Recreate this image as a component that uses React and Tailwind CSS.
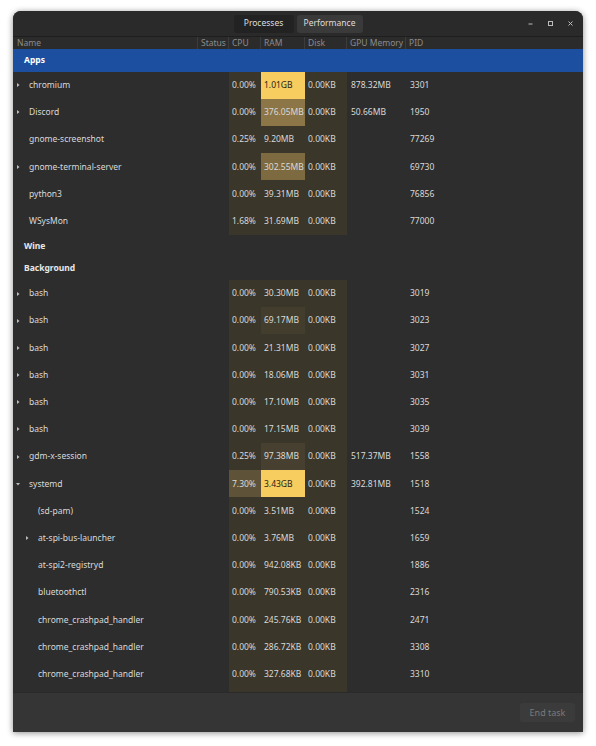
import React from "react";

const ROW_H = "h-[27.2px]";

const apps = [
  { name: "chromium", exp: "r", cpu: "0.00%", ram: "1.01GB", disk: "0.00KB", gpu: "878.32MB", pid: "3301", ramBg: "bg-[#f6cd5e]", ramDark: true },
  { name: "Discord", exp: "r", cpu: "0.00%", ram: "376.05MB", disk: "0.00KB", gpu: "50.66MB", pid: "1950", ramBg: "bg-[#8c7547]" },
  { name: "gnome-screenshot", cpu: "0.25%", ram: "9.20MB", disk: "0.00KB", gpu: "", pid: "77269" },
  { name: "gnome-terminal-server", exp: "r", cpu: "0.00%", ram: "302.55MB", disk: "0.00KB", gpu: "", pid: "69730", ramBg: "bg-[#7d6a40]" },
  { name: "python3", cpu: "0.00%", ram: "39.31MB", disk: "0.00KB", gpu: "", pid: "76856" },
  { name: "WSysMon", cpu: "1.68%", ram: "31.69MB", disk: "0.00KB", gpu: "", pid: "77000" },
];

const bg = [
  { name: "bash", exp: "r", cpu: "0.00%", ram: "30.30MB", disk: "0.00KB", gpu: "", pid: "3019" },
  { name: "bash", exp: "r", cpu: "0.00%", ram: "69.17MB", disk: "0.00KB", gpu: "", pid: "3023", ramBg: "bg-[#433d2d]" },
  { name: "bash", exp: "r", cpu: "0.00%", ram: "21.31MB", disk: "0.00KB", gpu: "", pid: "3027" },
  { name: "bash", exp: "r", cpu: "0.00%", ram: "18.06MB", disk: "0.00KB", gpu: "", pid: "3031" },
  { name: "bash", exp: "r", cpu: "0.00%", ram: "17.10MB", disk: "0.00KB", gpu: "", pid: "3035" },
  { name: "bash", exp: "r", cpu: "0.00%", ram: "17.15MB", disk: "0.00KB", gpu: "", pid: "3039" },
  { name: "gdm-x-session", exp: "r", cpu: "0.25%", ram: "97.38MB", disk: "0.00KB", gpu: "517.37MB", pid: "1558", ramBg: "bg-[#474030]" },
  { name: "systemd", exp: "d", cpu: "7.30%", ram: "3.43GB", disk: "0.00KB", gpu: "392.81MB", pid: "1518", ramBg: "bg-[#f6cd5e]", ramDark: true, cpuBg: "bg-[#5e5339]" },
  { name: "(sd-pam)", child: true, cpu: "0.00%", ram: "3.51MB", disk: "0.00KB", gpu: "", pid: "1524" },
  { name: "at-spi-bus-launcher", child: true, exp: "r", cpu: "0.00%", ram: "3.76MB", disk: "0.00KB", gpu: "", pid: "1659" },
  { name: "at-spi2-registryd", child: true, cpu: "0.00%", ram: "942.08KB", disk: "0.00KB", gpu: "", pid: "1886" },
  { name: "bluetoothctl", child: true, cpu: "0.00%", ram: "790.53KB", disk: "0.00KB", gpu: "", pid: "2316" },
  { name: "chrome_crashpad_handler", child: true, cpu: "0.00%", ram: "245.76KB", disk: "0.00KB", gpu: "", pid: "2471" },
  { name: "chrome_crashpad_handler", child: true, cpu: "0.00%", ram: "286.72KB", disk: "0.00KB", gpu: "", pid: "3308" },
  { name: "chrome_crashpad_handler", child: true, cpu: "0.00%", ram: "327.68KB", disk: "0.00KB", gpu: "", pid: "3310" },
];

function Tri({ dir }) {
  if (dir === "d") {
    return (
      <svg width="6" height="6" viewBox="0 0 6 6" className="shrink-0">
        <path d="M1 2 L5 2 L3 4.5 Z" fill="#bdbdbd" />
      </svg>
    );
  }
  return (
    <svg width="6" height="6" viewBox="0 0 6 6" className="shrink-0">
      <path d="M2 1 L4.5 3 L2 5 Z" fill="#bdbdbd" />
    </svg>
  );
}

function Row({ r }) {
  return (
    <div className={`flex ${ROW_H} items-stretch shrink-0`}>
      <div className={`w-[185px] flex items-center ${r.child ? "pl-[11px]" : "pl-[2px]"}`}>
        <div className="w-[14px] flex items-center justify-start">{r.exp ? <Tri dir={r.exp} /> : null}</div>
        <span>{r.name}</span>
      </div>
      <div className="w-[31px]" />
      <div className={`w-[32px] flex items-center pl-[3px] ${r.cpuBg || "bg-[#3a3629]"}`}>{r.cpu}</div>
      <div className={`w-[44px] flex items-center pl-[3px] ${r.ramBg || "bg-[#3a3629]"} ${r.ramDark ? "text-[#2a2418]" : ""}`}>{r.ram}</div>
      <div className="w-[42px] flex items-center pl-[3px] bg-[#3a3629]">{r.disk}</div>
      <div className="w-[59px] flex items-center pl-[4px]">{r.gpu}</div>
      <div className="flex-1 flex items-center pl-[4px]">{r.pid}</div>
    </div>
  );
}

function Filler() {
  return (
    <div className="flex flex-1 items-stretch">
      <div className="w-[185px]" />
      <div className="w-[31px]" />
      <div className="w-[32px] bg-[#3a3629]" />
      <div className="w-[44px] bg-[#3a3629]" />
      <div className="w-[42px] bg-[#3a3629]" />
      <div className="flex-1" />
    </div>
  );
}

function Group({ label, selected }) {
  return (
    <div className={`flex h-[22.6px] items-center pl-[11px] font-bold shrink-0 ${selected ? "bg-[#1c4fa0] text-white" : "text-[#e8e8e8]"}`}>
      {label}
    </div>
  );
}

function Hd({ w, label, last }) {
  return (
    <div className={`${w} flex items-center pl-[3px] ${last ? "" : "border-r border-[#3c3c3c]"}`}>{label}</div>
  );
}

export default function App() {
  return (
    <div className="w-[596px] h-[746px] bg-white flex pt-[11px] pl-[13px]" style={{ fontFamily: '"Noto Sans", "Open Sans", sans-serif' }}>
      <div className="w-[570px] h-[721px] bg-[#2d2d2d] rounded-t-[8px] overflow-hidden flex flex-col shadow-[0_1px_6px_rgba(0,0,0,0.45)] text-[8.5px] text-[#d9d9d9] leading-none">
        {/* title bar */}
        <div className="h-[25px] bg-[#2a2a2a] flex items-center relative shrink-0">
          <div className="flex-1 flex justify-center items-center gap-[3px]">
            <div className="h-[18px] w-[60px] justify-center flex items-center bg-[#222222] rounded-[3px] text-[#dedede] text-[8.5px]">Processes</div>
            <div className="h-[18px] w-[66px] justify-center flex items-center bg-[#3a3a3a] rounded-[3px] text-[#dedede] text-[8.5px]">Performance</div>
          </div>
          <div className="absolute right-[9px] top-0 h-[25px] flex items-center gap-[13px] text-[#bbbbbb]">
            <svg width="7" height="7" viewBox="0 0 7 7"><path d="M1.5 4h4" stroke="#bbb" strokeWidth="1" /></svg>
            <svg width="7" height="7" viewBox="0 0 7 7"><rect x="1.5" y="1.5" width="4" height="4" fill="none" stroke="#bbb" strokeWidth="1" /></svg>
            <svg width="7" height="7" viewBox="0 0 7 7"><path d="M1.5 1.5l4 4M5.5 1.5l-4 4" stroke="#bbb" strokeWidth="1" /></svg>
          </div>
        </div>
        {/* header */}
        <div className="h-[13px] bg-[#2b2b2b] border-t border-[#1e1e1e] flex items-stretch text-[#8c8c8c] shrink-0">
          <Hd w="w-[185px]" label={<span className="pl-[1px]">Name</span>} />
          <Hd w="w-[31px]" label="Status" />
          <Hd w="w-[32px]" label="CPU" />
          <Hd w="w-[44px]" label="RAM" />
          <Hd w="w-[42px]" label="Disk" />
          <Hd w="w-[59px]" label="GPU Memory" />
          <Hd w="flex-1" label="PID" last />
        </div>
        {/* table */}
        <div className="flex-1 flex flex-col overflow-hidden">
          <Group label="Apps" selected />
          {apps.map((r, i) => <Row key={"a" + i} r={r} />)}
          <Group label="Wine" />
          <Group label="Background" />
          {bg.map((r, i) => <Row key={"b" + i} r={r} />)}
          <Filler />
        </div>
        {/* footer */}
        <div className="h-[40px] bg-[#353535] border-t border-[#2a2a2a] flex items-center justify-end pr-[8px] shrink-0">
          <div className="h-[19px] w-[55px] flex items-center justify-center bg-[#3b3b3b] rounded-[3px] text-[#7a7a7a] text-[9px]">End task</div>
        </div>
      </div>
    </div>
  );
}
